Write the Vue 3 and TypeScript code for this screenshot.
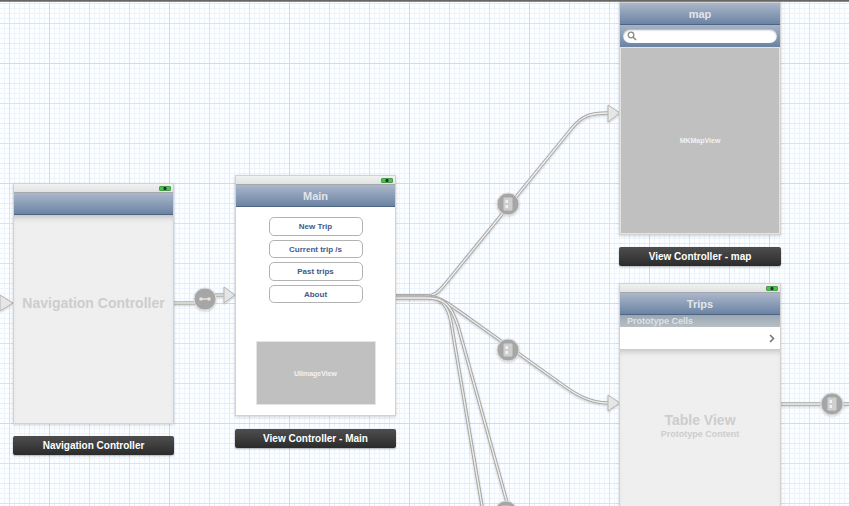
<template>
  <div class="canvas">
    <div class="top-edge"></div>

    <svg class="segues" width="849" height="506" viewBox="0 0 849 506">
      <defs>
        <filter id="soft" filterUnits="userSpaceOnUse" x="0" y="0" width="849" height="506">
          <feDropShadow dx="0" dy="1" stdDeviation="1" flood-color="#000" flood-opacity="0.2" />
        </filter>
      </defs>
      <g filter="url(#soft)">
        <g v-for="line in lines" :key="line" fill="none">
          <path :d="line" stroke="#a9a9a9" stroke-width="3.4" />
          <path :d="line" stroke="#efefef" stroke-width="1.3" />
        </g>
        <polygon
          v-for="head in arrows"
          :key="head"
          :points="head"
          fill="#e6e6e6"
          stroke="#b4b4b4"
          stroke-width="1"
        />
        <g v-for="dot in badges" :key="dot.x" :transform="`translate(${dot.x} ${dot.y})`">
          <circle r="11" fill="#a6a6a6" stroke="#dcdcdc" stroke-width="1" />
          <template v-if="dot.nav">
            <rect x="-4" y="-0.7" width="8" height="1.4" fill="#e4e4e4" />
            <circle cx="-4" r="1.8" fill="#e4e4e4" />
            <circle cx="4" r="1.8" fill="#e4e4e4" />
          </template>
          <template v-else>
            <rect x="-4.5" y="-6.5" width="9" height="13" rx="1" fill="#cfcfcf" />
            <rect x="-2.5" y="-4" width="2.5" height="3" fill="#f1f1f1" />
            <rect x="-2.5" y="1" width="2.5" height="3" fill="#f1f1f1" />
          </template>
        </g>
      </g>
    </svg>

    <!-- navigation controller -->
    <section class="scene scene--nav">
      <div class="status"><span class="battery"></span></div>
      <div class="navbar"></div>
      <div class="ghost ghost--nav">
        <div class="ghost__title">Navigation Controller</div>
      </div>
    </section>
    <div class="dock dock--nav">Navigation Controller</div>

    <!-- main -->
    <section class="scene scene--main">
      <div class="status"><span class="battery"></span></div>
      <div class="navbar">Main</div>
      <div class="main-body">
        <div class="buttons">
          <div v-for="item in menu" :key="item" class="round-btn">{{ item }}</div>
        </div>
        <div class="placeholder placeholder--image">UIImageView</div>
      </div>
    </section>
    <div class="dock dock--main">View Controller - Main</div>

    <!-- map -->
    <section class="scene scene--map">
      <div class="navbar">map</div>
      <div class="searchbar">
        <div class="searchbar__field">
          <svg width="10" height="10" viewBox="0 0 10 10">
            <circle cx="4" cy="4" r="2.8" fill="none" stroke="#8a8a8a" stroke-width="1.3" />
            <path d="M6 6l3 3" stroke="#8a8a8a" stroke-width="1.6" />
          </svg>
        </div>
      </div>
      <div class="placeholder placeholder--map">MKMapView</div>
    </section>
    <div class="dock dock--map">View Controller - map</div>

    <!-- trips -->
    <section class="scene scene--trips">
      <div class="status"><span class="battery"></span></div>
      <div class="navbar">Trips</div>
      <div class="section-head">Prototype Cells</div>
      <div class="cell">
        <svg width="6" height="9" viewBox="0 0 6 9">
          <path d="M1 1l3.5 3.5L1 8" fill="none" stroke="#777" stroke-width="1.6" />
        </svg>
      </div>
      <div class="ghost ghost--table">
        <div class="ghost__title">Table View</div>
        <div class="ghost__sub">Prototype Content</div>
      </div>
    </section>
  </div>
</template>

<script setup lang="ts">
interface Badge {
  x: number;
  y: number;
  nav?: boolean;
}

const menu: string[] = ['New Trip', 'Current trip /s', 'Past trips', 'About'];

const lines: string[] = [
  'M173 303 H205',
  'M205 295 H226',
  'M395 296 H426 C436 296 440 290 446 283 L572 128 C582 116 590 113 608 113',
  'M395 296 H424 C438 296 446 302 456 309 L560 383 C576 395 590 403 608 403',
  'M395 297 H424 C442 297 448 306 451 322 L482 506',
  'M395 298 H428 C446 298 452 308 458 326 L508 506',
  'M780 404 H849'
];

const arrows: string[] = [
  '0,295 13,303 0,311',
  '224,287 235,295 224,303',
  '608,105 620,113 608,122',
  '608,395 620,403 608,411'
];

const badges: Badge[] = [
  { x: 205, y: 299, nav: true },
  { x: 508, y: 204 },
  { x: 508, y: 350 },
  { x: 506, y: 512 },
  { x: 832, y: 404 }
];
</script>

<style>
html,
body {
  margin: 0;
  overflow: hidden;
}
</style>

<style scoped>
.canvas {
  position: relative;
  width: 849px;
  height: 506px;
  overflow: hidden;
  font-family: 'Liberation Sans', Arial, sans-serif;
  background-color: #fdfeff;
  background-image:
    linear-gradient(90deg, #c8dcf4 1px, transparent 1px),
    linear-gradient(#c8dcf4 1px, transparent 1px),
    linear-gradient(90deg, #d4e4f7 1px, transparent 1px),
    linear-gradient(#d4e4f7 1px, transparent 1px),
    linear-gradient(90deg, #e0ecf9 1px, transparent 1px),
    linear-gradient(#e0ecf9 1px, transparent 1px),
    linear-gradient(90deg, #edf4fc 1px, transparent 1px),
    linear-gradient(#edf4fc 1px, transparent 1px);
  background-size:
    120px 120px,
    120px 120px,
    40px 40px,
    40px 40px,
    20px 20px,
    20px 20px,
    5px 5px,
    5px 5px;
  background-position:
    49px 0,
    0 63px,
    9px 0,
    0 23px,
    9px 0,
    0 3px,
    4px 0,
    0 3px;
}

.top-edge {
  height: 2px;
  background: linear-gradient(#555, #999);
}

.segues {
  position: absolute;
  left: 0;
  top: 0;
}

.scene {
  position: absolute;
  display: flex;
  flex-direction: column;
  box-sizing: border-box;
  background: #fff;
  border: 1px solid #d2d2d2;
  box-shadow: 0 1px 3px rgb(0 0 0 / 18%);
}

.scene--nav {
  left: 13px;
  top: 183px;
  width: 161px;
  height: 241px;
}

.scene--main {
  left: 235px;
  top: 175px;
  width: 161px;
  height: 241px;
}

.scene--map {
  left: 619px;
  top: 2px;
  width: 162px;
  height: 233px;
}

.scene--trips {
  left: 619px;
  top: 283px;
  width: 162px;
  height: 240px;
}

.status {
  flex: none;
  display: flex;
  justify-content: flex-end;
  align-items: center;
  height: 8px;
  padding-right: 2px;
  background: linear-gradient(#f0f2f1, #dfe3e2);
  border-bottom: 1px solid #a5a8aa;
}

.battery {
  width: 10px;
  height: 3px;
  border: 1px solid #4a9a4a;
  border-radius: 1px;
  background: radial-gradient(circle, #234 0 1.2px, #45c84a 2px);
}

.navbar {
  flex: none;
  height: 21px;
  line-height: 23px;
  text-align: center;
  font-size: 11px;
  font-weight: 700;
  color: #e2e5ea;
  background: linear-gradient(#abb7cb, #6b84a4);
  border-bottom: 1px solid #4f6480;
}

.ghost {
  flex: 1;
  display: flex;
  flex-direction: column;
  align-items: center;
  background: rgb(236 236 236 / 82%);
  box-shadow: inset 0 6px 6px -4px rgb(0 0 0 / 22%);
}

.ghost--nav {
  padding-top: 79px;
}

.ghost--table {
  padding-top: 62px;
}

.ghost__title {
  font-size: 14px;
  line-height: 18px;
  font-weight: 700;
  color: #cdcdcd;
}

.ghost__sub {
  font-size: 9px;
  line-height: 11px;
  font-weight: 700;
  color: #cdcdcd;
}

.main-body {
  flex: 1;
  display: flex;
  flex-direction: column;
  align-items: center;
  padding-top: 10px;
}

.buttons {
  display: flex;
  flex-direction: column;
  gap: 4px;
}

.round-btn {
  box-sizing: border-box;
  width: 94px;
  height: 18.5px;
  line-height: 18px;
  text-align: center;
  font-size: 8px;
  font-weight: 700;
  color: #44598a;
  background: #fff;
  border: 1px solid #b3b3b3;
  border-radius: 5px;
}

.placeholder {
  display: flex;
  align-items: center;
  justify-content: center;
  box-sizing: border-box;
  font-size: 7px;
  font-weight: 700;
  color: #f2f2f2;
  background: #c0c0c0;
  border: 1px solid #e4e4e4;
}

.placeholder--image {
  width: 120px;
  height: 64px;
  margin-top: 38px;
}

.placeholder--map {
  flex: 1;
}

.searchbar {
  flex: none;
  display: flex;
  align-items: center;
  height: 22px;
  padding: 0 3px;
  background: linear-gradient(#a6b3c8, #6a83a3);
}

.searchbar__field {
  flex: 1;
  display: flex;
  align-items: center;
  height: 14px;
  padding-left: 4px;
  background: #fff;
  border-radius: 7px;
  box-shadow: inset 0 1px 2px rgb(0 0 0 / 35%);
}

.section-head {
  flex: none;
  height: 12px;
  line-height: 12px;
  padding-left: 7px;
  font-size: 9px;
  font-weight: 700;
  color: #dfe2e6;
  background: linear-gradient(#9aa8b4, #b8bfc5);
}

.cell {
  flex: none;
  display: flex;
  align-items: center;
  justify-content: flex-end;
  height: 22px;
  padding-right: 5px;
  background: #fff;
}

.dock {
  position: absolute;
  box-sizing: border-box;
  width: 161px;
  height: 19px;
  line-height: 19px;
  text-align: center;
  font-size: 10px;
  font-weight: 700;
  color: #fff;
  background: linear-gradient(#4e4e4e, #2b2b2b);
  border-radius: 2px;
  box-shadow: 0 1px 2px rgb(0 0 0 / 30%);
}

.dock--nav {
  left: 13px;
  top: 436px;
}

.dock--main {
  left: 235px;
  top: 429px;
}

.dock--map {
  left: 619px;
  top: 247px;
  width: 162px;
}
</style>
